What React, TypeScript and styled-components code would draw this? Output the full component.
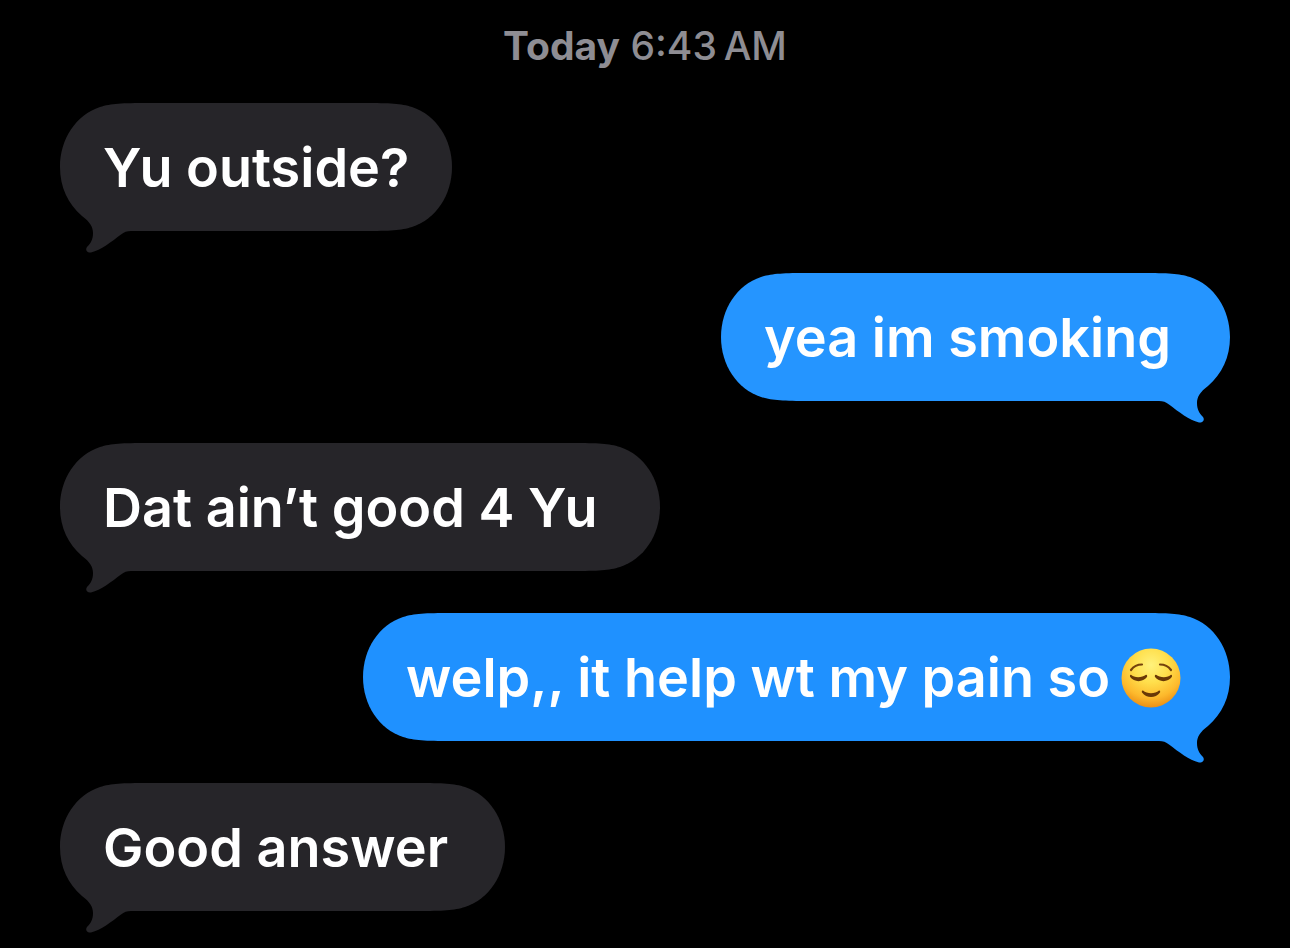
import React from "react";
import styled, { createGlobalStyle } from "styled-components";

type Side = "received" | "sent";

const GlobalStyle = createGlobalStyle`
  *, *::before, *::after { box-sizing: border-box; }
  body { margin: 0; background: #000; }
`;

const Conversation = styled.main`
  min-height: 100vh;
  padding: 22px 60px 37px;
  background: #000;
  font-family: Inter, "Liberation Sans", sans-serif;
`;

const Timestamp = styled.header`
  margin-bottom: 33px;
  color: #8e8d93;
  font-size: 39px;
  line-height: 48px;
  font-weight: 500;
  text-align: center;
`;

const Day = styled.strong`
  font-weight: 700;
`;

const Thread = styled.ol`
  display: flex;
  flex-direction: column;
  gap: 42px;
  margin: 0;
  padding: 0;
  list-style: none;
`;

const Bubble = styled.li<{ $side: Side; $tone: string; $width: number }>`
  position: relative;
  isolation: isolate;
  display: flex;
  align-items: center;
  align-self: ${(p) => (p.$side === "sent" ? "flex-end" : "flex-start")};
  width: ${(p) => p.$width}px;
  max-width: 100%;
  min-height: 128px;
  padding: 2px 0 0 43px;
  color: ${(p) => p.$tone};

  &::before {
    content: "";
    position: absolute;
    z-index: -1;
    inset: 0 87px;
    background: currentColor;
  }
`;

const Cap = styled.svg<{ $edge: "left" | "right" }>`
  position: absolute;
  z-index: -1;
  top: 0;
  ${(p) => p.$edge}: 0;
  width: 88px;
  height: 152px;
  fill: currentColor;
  transform: ${(p) => (p.$edge === "right" ? "scaleX(-1)" : "none")};
`;

const Text = styled.p`
  display: flex;
  align-items: center;
  gap: 11px;
  margin: 0;
  color: #fff;
  font-size: 54px;
  line-height: 72px;
  font-weight: 600;
  white-space: nowrap;
`;

const Emoji = styled.svg`
  flex: none;
  width: 60px;
  height: 60px;
`;

const PLAIN_CAP =
  "M88 0 C62 0 51 0.500 40 4 C16 12 0 36 0 64 C0 92 16 116 40 124 C51 127.500 62 128 88 128 Z";
const TAIL_CAP =
  "M88 0 C62 0 51 0.500 40 4 C16 12 0 36 0 64 C0 84 8 101 22 113 C30 119 33 124 33 130 C33 136 31 140 27 144 C25 147 27 150 31 149.500 C41 147 51 139 61 131.500 C64 129 67 128 71 128 H88 Z";

function BubbleEnd({ edge, tail }: { edge: "left" | "right"; tail: boolean }) {
  return (
    <Cap $edge={edge} viewBox="0 0 88 152" aria-hidden="true">
      <path d={tail ? TAIL_CAP : PLAIN_CAP} />
    </Cap>
  );
}

function RelievedFace() {
  return (
    <Emoji viewBox="0 0 60 60" role="img" aria-label="relieved face">
      <defs>
        <radialGradient id="face" cx="50%" cy="28%" r="74%">
          <stop offset="0" stopColor="#fff27c" />
          <stop offset="0.4" stopColor="#ffdf4c" />
          <stop offset="0.75" stopColor="#fdb92c" />
          <stop offset="1" stopColor="#ea8a12" />
        </radialGradient>
      </defs>
      <circle cx="30" cy="30" r="29.5" fill="url(#face)" />
      <g fill="none" stroke="#75420c" strokeLinecap="round">
        <path d="M10 22 Q14 16.500 21 16.500" strokeWidth="2.200" />
        <path d="M50 22 Q46 16.500 39 16.500" strokeWidth="2.200" />
      </g>
      <g fill="#693807">
        <path d="M10 26.800 C13 30 21 30 25 26.800 C26 26.500 26.500 28 26 29 C22 34.500 13 34.500 9.200 29 C8.700 28 9 26.500 10 26.800 Z" />
        <path d="M50 26.800 C47 30 39 30 35 26.800 C34 26.500 33.500 28 34 29 C38 34.500 47 34.500 50.800 29 C51.300 28 51 26.500 50 26.800 Z" />
        <path d="M22 42.500 C26 46 34 46 38 42.500 C39 42 39.500 43.500 39 44.500 C34.500 50.500 25.500 50.500 21 44.500 C20.500 43.500 21 42 22 42.500 Z" />
      </g>
    </Emoji>
  );
}

interface Message {
  side: Side;
  text: string;
  tone: string;
  width: number;
  relieved?: boolean;
}

const messages: Message[] = [
  { side: "received", text: "Yu outside?", tone: "#262529", width: 392 },
  { side: "sent", text: "yea im smoking", tone: "#2595ff", width: 509 },
  { side: "received", text: "Dat ain’t good 4 Yu", tone: "#262529", width: 600 },
  { side: "sent", text: "welp,, it help wt my pain so", tone: "#1f91ff", width: 867, relieved: true },
  { side: "received", text: "Good answer", tone: "#262529", width: 445 },
];

export default function App() {
  return (
    <>
      <GlobalStyle />
      <Conversation>
        <Timestamp>
          <Day>Today</Day> 6:43{"\u2009"}AM
        </Timestamp>
        <Thread>
          {messages.map((m) => (
            <Bubble key={m.text} $side={m.side} $tone={m.tone} $width={m.width}>
              <BubbleEnd edge="left" tail={m.side === "received"} />
              <BubbleEnd edge="right" tail={m.side === "sent"} />
              <Text>
                {m.text}
                {m.relieved && <RelievedFace />}
              </Text>
            </Bubble>
          ))}
        </Thread>
      </Conversation>
    </>
  );
}
